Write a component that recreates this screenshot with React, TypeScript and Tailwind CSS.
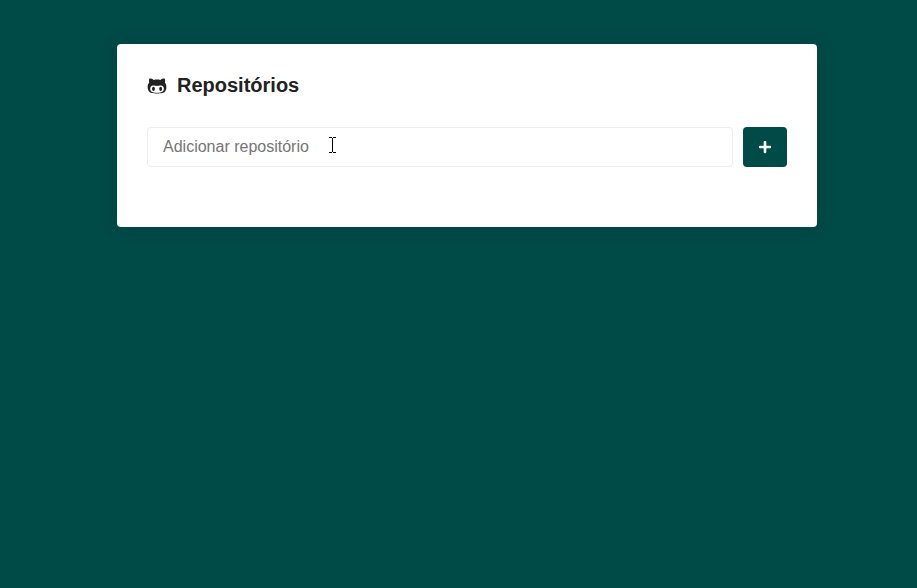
import React from "react";
import { FaGithubAlt, FaPlus } from "react-icons/fa";

export default function App() {
  return (
    <div className="h-screen overflow-hidden bg-[#004a48] font-['Liberation_Sans',Arial,sans-serif] pt-11 pl-[117px]">
      <main className="w-[700px] h-[183px] rounded bg-white p-[30px] shadow-[0_0_20px_rgba(0,0,0,0.1)]">
        <h1 className="flex items-center text-[20px] leading-[23px] font-bold text-[#222]">
          <FaGithubAlt size={20} className="mr-2.5" />
          Repositórios
        </h1>
        <form className="mt-[30px] flex h-10" onSubmit={(e) => e.preventDefault()}>
          <div className="relative flex-1">
            <input
              className="h-10 w-full rounded border border-[#eee] px-[15px] text-[16px] outline-none placeholder:text-[#757575]"
              placeholder="Adicionar repositório"
            />
            <svg className="absolute left-[182px] top-[10px]" width="7" height="16" viewBox="0 0 7 16" shapeRendering="crispEdges" fill="#000">
              <path d="M0 0h3v1H0zM4 0h3v1H4zM3 1h1v14H3zM0 15h3v1H0zM4 15h3v1H4z" />
            </svg>
          </div>
          <button className="ml-2.5 flex w-11 items-center justify-center rounded bg-[#004a48] text-white" aria-label="Adicionar">
            <FaPlus size={14} />
          </button>
        </form>
      </main>
    </div>
  );
}
